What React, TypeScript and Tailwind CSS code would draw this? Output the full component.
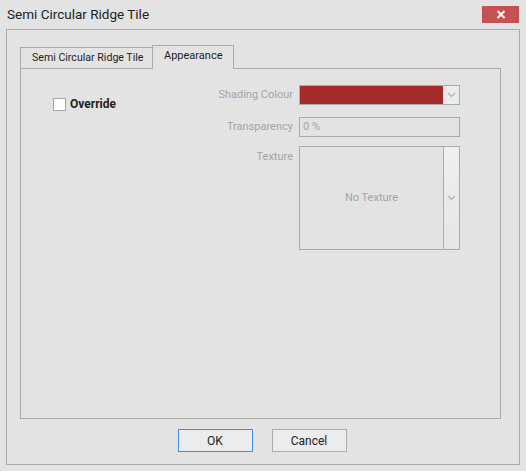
import React from 'react';

const Chevron: React.FC = () => (
  <svg width="9" height="6" viewBox="0 0 9 6" className="text-[#b4b4b4]">
    <path d="M1 1 L4.5 4.5 L8 1" fill="none" stroke="currentColor" strokeWidth="1.3" />
  </svg>
);

const App: React.FC = () => {
  return (
    <div
      className="w-[526px] h-[471px] bg-[#e3e3e3] flex flex-col text-[11px] text-[#1e1e1e]"
      style={{ fontFamily: 'Roboto, "Noto Sans", sans-serif' }}
    >
      {/* Title bar */}
      <div className="h-[29px] flex items-start justify-between pl-[7px] pr-[7px]">
        <div className="text-[13.5px] leading-none mt-[8px] text-[#222]">Semi Circular Ridge Tile</div>
        <button className="mt-[6px] w-[37px] h-[17px] bg-[#c75050] flex items-center justify-center">
          <svg width="10" height="9" viewBox="0 0 10 9">
            <path d="M1.5 1 L8.5 8 M8.5 1 L1.5 8" stroke="white" strokeWidth="2" />
          </svg>
        </button>
      </div>

      {/* Body */}
      <div className="mx-[6px] mb-[6px] h-[436px] border border-[#ababab] flex flex-col pl-[13px] pr-[18px] pt-[15px]">
        {/* Tabs */}
        <div className="flex items-end -mb-px h-[24px]">
          <div className="h-[22px] w-[132px] border-l border-t border-b border-[#ababab] pl-[11px] flex items-center whitespace-nowrap text-[10.6px]">
            Semi Circular Ridge Tile
          </div>
          <div className="relative z-10 h-[24px] w-[82px] border border-b-0 border-[#ababab] bg-[#e3e3e3] pl-[11px] pb-[2px] flex items-center whitespace-nowrap">
            Appearance
          </div>
        </div>

        {/* Tab panel */}
        <div className="h-[351px] border border-[#ababab] flex pl-[32px] pt-[16px]">
          <label className="flex items-center gap-[4px] h-[14px] mt-[12px] self-start">
            <span className="w-[13px] h-[13px] bg-white border border-[#a3a3a3]" />
            <span className="font-bold text-[12px] text-[#222]">Override</span>
          </label>

          <div className="ml-auto mr-[40px] flex flex-col gap-[12px] text-[#a3a3a3]">
            <div className="flex items-center gap-[6px]">
              <span className="w-[90px] text-right">Shading Colour</span>
              <div className="w-[161px] h-[20px] border border-[#ababab] flex">
                <div className="flex-1 bg-[#a52a2a]" />
                <div className="w-[16px] bg-[#ececec] flex items-center justify-center">
                  <Chevron />
                </div>
              </div>
            </div>

            <div className="flex flex-col gap-[9px]">
              <div className="flex items-center gap-[6px]">
                <span className="w-[90px] text-right">Transparency</span>
                <div className="w-[161px] h-[20px] border border-[#ababab] flex items-center pl-[3px]">0 %</div>
              </div>

              <div className="flex items-start gap-[6px]">
                <span className="w-[90px] text-right mt-[3px]">Texture</span>
                <div className="w-[161px] h-[104px] border border-[#ababab] flex">
                  <div className="flex-1 flex items-center justify-center">No Texture</div>
                  <div className="w-[16px] border-l border-[#ababab] bg-gradient-to-b from-[#efefef] to-[#e6e6e6] flex items-center justify-center">
                    <Chevron />
                  </div>
                </div>
              </div>
            </div>
          </div>
        </div>

        {/* Buttons */}
        <div className="flex justify-center gap-[19px] mt-[10px] pl-[3px]">
          <button className="w-[75px] h-[23px] border border-[#3d8ee6] bg-[#ececec] text-[12px] text-[#222]">OK</button>
          <button className="w-[75px] h-[23px] border border-[#adadad] bg-[#ececec] text-[12px] text-[#222]">Cancel</button>
        </div>
      </div>
    </div>
  );
};

export default App;
